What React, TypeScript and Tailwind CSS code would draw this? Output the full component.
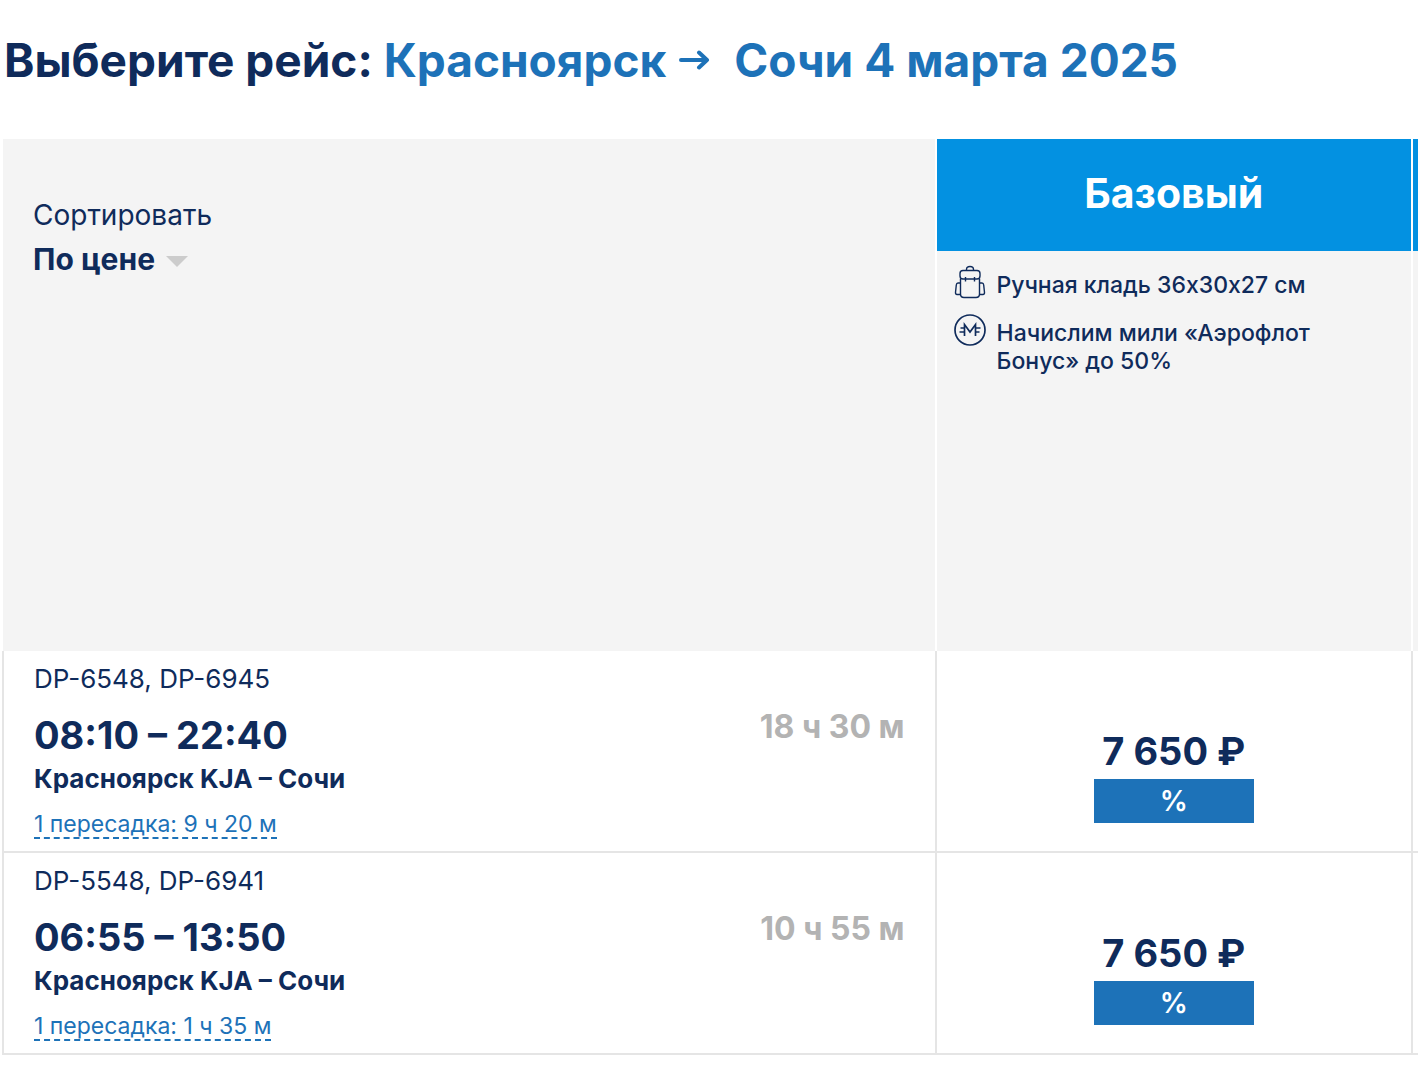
import type { ReactNode } from 'react';

type Flight = {
  id: string;
  numbers: string;
  time: string;
  route: string;
  transfer: string;
  duration: string;
  price: string;
};

const flights: Flight[] = [
  {
    id: '1',
    numbers: 'DP-6548, DP-6945',
    time: '08:10 – 22:40',
    route: 'Красноярск KJA – Сочи',
    transfer: '1 пересадка: 9 ч 20 м',
    duration: '18 ч 30 м',
    price: '7 650 ₽',
  },
  {
    id: '2',
    numbers: 'DP-5548, DP-6941',
    time: '06:55 – 13:50',
    route: 'Красноярск KJA – Сочи',
    transfer: '1 пересадка: 1 ч 35 м',
    duration: '10 ч 55 м',
    price: '7 650 ₽',
  },
];

function ArrowIcon() {
  return (
    <svg width="32" height="20" viewBox="0 0 32 20" fill="none" aria-hidden="true">
      <path
        d="M3 10H29M21 2.500L29 10L21 17.500"
        stroke="currentColor"
        strokeWidth="4"
        strokeLinecap="round"
        strokeLinejoin="round"
      />
    </svg>
  );
}

function BackpackIcon() {
  return (
    <svg
      width="32"
      height="32"
      viewBox="0 0 32 32"
      fill="none"
      stroke="currentColor"
      strokeWidth="1.4"
      className="overflow-visible"
      aria-hidden="true"
    >
      <path d="M12.500 4.500V3.500a3.500 3 0 0 1 7 0V4.500" />
      <path d="M9 4.500H23Q26 4.500 26 7.500V10Q26 13 23 13H9Q6 13 6 10V7.500Q6 4.500 9 4.500Z" />
      <path d="M11.500 11V15.500M20.500 11V15.500" />
      <path d="M6.500 12.500V28Q6.500 31.500 10 31.500H22Q25.500 31.500 25.500 28V12.500" />
      <path d="M6.500 17H4Q2.500 17 2.300 19L1.500 26.500Q1.500 28.500 3 28.500H6.500M25.500 17H28Q29.500 17 29.700 19L30.500 26.500Q30.500 28.500 29 28.500H25.500" />
    </svg>
  );
}

function MilesIcon() {
  return (
    <svg width="32" height="32" viewBox="0 0 32 32" fill="none" stroke="currentColor" strokeWidth="1.7" aria-hidden="true">
      <circle cx="16" cy="16" r="15" />
      <path d="M10.500 22V10.500L16 18L21.500 10.500V22" />
      <path d="M6.500 14H10.500M5.500 18H10.500M21.500 14H26.500M21.500 18H25.500" />
    </svg>
  );
}

function Feature({ icon, children }: { icon: ReactNode; children: ReactNode }) {
  return (
    <li className="flex items-start gap-[11px]">
      <span className="h-8 shrink-0">{icon}</span>
      <span className="pt-[5px]">{children}</span>
    </li>
  );
}

function FlightRow({ flight }: { flight: Flight }) {
  return (
    <tr>
      <td className="border-x-2 border-b-2 border-[#e5e5e5] px-[30px] py-3 align-top">
        <div className="flex items-start justify-between">
          <div>
            <div className="text-[26px] leading-8">{flight.numbers}</div>
            <div className="mt-4 text-[38px] leading-12 font-bold">{flight.time}</div>
            <div className="text-[26px] leading-10 font-bold">{flight.route}</div>
            <a
              href="#transfer"
              className="mt-3 block w-fit border-b-2 border-dashed border-[#1d72b8] text-[23px] leading-[26px] text-[#1d72b8]"
            >
              {flight.transfer}
            </a>
          </div>
          <div className="pt-11 text-[32px] leading-10 font-bold text-[#b3b3b3]">{flight.duration}</div>
        </div>
      </td>
      <td className="border-r-2 border-b-2 border-[#e5e5e5] pt-[76px] text-center align-top">
        <div className="text-[38px] leading-12 font-bold">{flight.price}</div>
        <button
          type="button"
          className="mx-auto mt-1 block h-11 w-40 bg-[#1d72b8] text-[28px] leading-8 font-semibold text-white"
        >
          %
        </button>
      </td>
      <td className="border-b-2 border-[#e5e5e5]" />
    </tr>
  );
}

export default function App() {
  return (
    <main className="overflow-x-hidden bg-white pb-5 font-['Inter',sans-serif] text-[#0f2b5b]">
      <h1 className="flex items-center pt-8 pl-1 text-[46px] leading-14 font-bold whitespace-pre">
        Выберите рейс:{' '}
        <span className="flex items-center gap-3 text-[#1d72b8]">
          Красноярск
          <ArrowIcon />
          <span className="pl-3">Сочи 4 марта 2025</span>
        </span>
      </h1>

      <div className="mt-[51px] pl-0.5">
        <table className="w-full table-fixed border-separate border-spacing-0">
          <colgroup>
            <col className="w-[66%]" />
            <col />
            <col className="w-[5px]" />
          </colgroup>
          <thead>
            <tr className="h-[512px] text-left align-top">
              <th className="border-r-2 border-l border-white bg-[#f4f4f4] px-[30px] pt-[60px] font-normal">
                <label htmlFor="sort" className="block text-[28px] leading-8">
                  Сортировать
                </label>
                <div className="mt-3 flex items-center gap-[11px]">
                  <select
                    id="sort"
                    className="field-sizing-content appearance-none bg-transparent text-[30px] leading-8 font-bold"
                  >
                    <option>По цене</option>
                  </select>
                  <svg width="22" height="11" viewBox="0 0 22 11" className="mt-1" aria-hidden="true">
                    <path d="M0 0H22L11 11Z" fill="#cccccc" />
                  </svg>
                </div>
              </th>
              <th className="border-r-2 border-white bg-[#f4f4f4] font-normal">
                <div className="flex h-28 items-center justify-center bg-[#0391e1] pb-1 text-[41px] leading-12 font-bold text-white">
                  Базовый
                </div>
                <ul className="space-y-[15px] px-[17px] pt-[15px] text-[23px] leading-7 font-medium [font-feature-settings:'calt'_0]">
                  <Feature icon={<BackpackIcon />}>Ручная кладь 36x30x27 см</Feature>
                  <Feature icon={<MilesIcon />}>Начислим мили «Аэрофлот Бонус» до 50%</Feature>
                </ul>
              </th>
              <th className="bg-[#f4f4f4] p-0">
                <div className="h-28 bg-[#0391e1]" />
              </th>
            </tr>
          </thead>
          <tbody>
            {flights.map((flight) => (
              <FlightRow key={flight.id} flight={flight} />
            ))}
          </tbody>
        </table>
      </div>
    </main>
  );
}
